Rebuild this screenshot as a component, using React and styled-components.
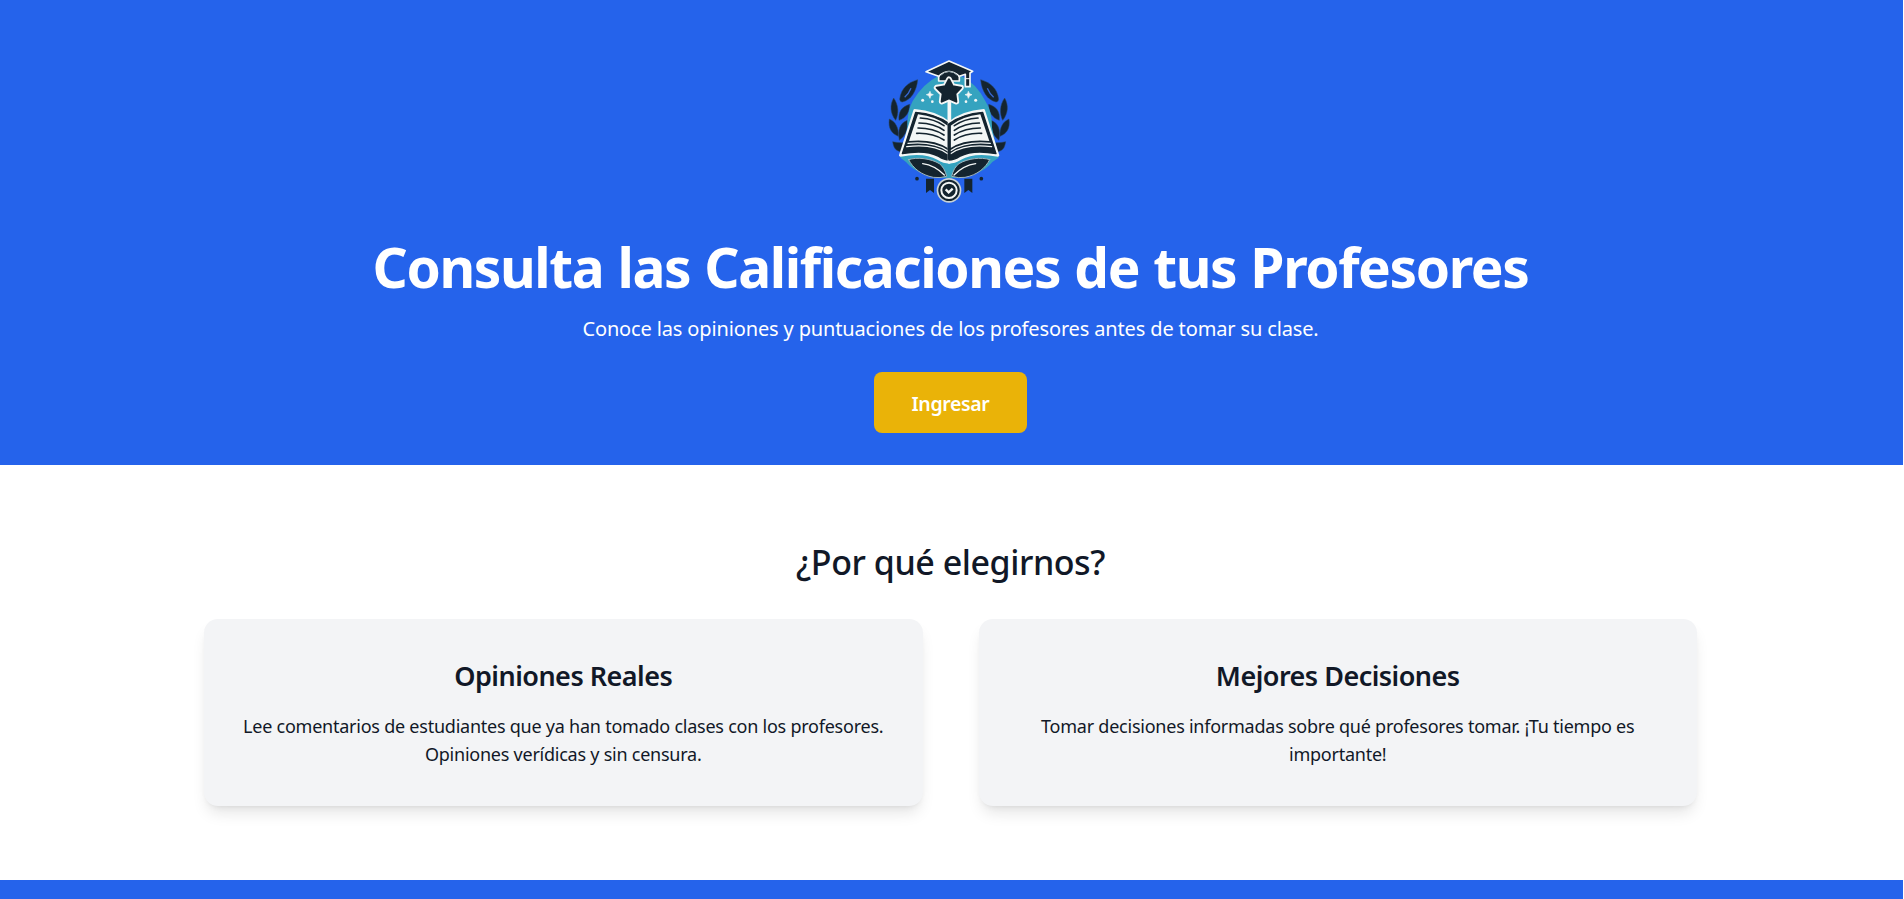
import React from 'react';
import styled, { createGlobalStyle } from 'styled-components';

const GlobalStyle = createGlobalStyle`
  * { box-sizing: border-box; }
  html { background: #fff; }
  body {
    margin: 0;
    overflow: hidden;
    font-family: 'Noto Sans', 'Open Sans', sans-serif;
    color: #111827;
  }
  h1, h2, h3, p { margin: 0; }
`;

const Page = styled.div`
  width: calc(100% - 1px);
  height: 899px;
  overflow: hidden;
`;

const Hero = styled.header`
  display: flex;
  flex-direction: column;
  align-items: center;
  height: 465px;
  padding: 45px 2px 32px 0;
  background: #2563eb;
  color: #fff;
  text-align: center;
`;

const Logo = styled.svg`
  display: block;
  flex: none;
  width: 160px;
  height: 170px;
  margin-right: 1px;
`;

const HeroTitle = styled.h1`
  margin-top: 22px;
  font-size: 55px;
  font-weight: 700;
  line-height: 60px;
  letter-spacing: -1.4px;
  word-spacing: 1.2px;
`;

const HeroText = styled.p`
  margin-top: 18px;
  font-size: 20px;
  line-height: 28px;
  letter-spacing: -0.14px;
`;

const EnterButton = styled.button`
  width: 153px;
  height: 61px;
  margin-top: 29px;
  padding: 1px 0 0;
  border: 0;
  border-radius: 8px;
  background: #eab308;
  color: #fff;
  font-family: inherit;
  font-size: 19.5px;
  font-weight: 600;
  letter-spacing: -0.36px;
`;

const Features = styled.section`
  padding: 77px 2px 74px 0;
  background: #fff;
  text-align: center;
`;

const SectionTitle = styled.h2`
  font-size: 34px;
  font-weight: 500;
  line-height: 40px;
  letter-spacing: -0.45px;
`;

const CardGrid = styled.div`
  display: grid;
  grid-template-columns: 1fr 1fr;
  gap: 56px;
  width: 1493px;
  margin: 37px auto 0;
`;

const Card = styled.article`
  height: 187px;
  padding: 39px 32px 37px;
  border-radius: 14px;
  background: #f3f4f6;
  box-shadow: 0 10px 15px -3px rgba(0, 0, 0, 0.1), 0 4px 6px -4px rgba(0, 0, 0, 0.1);
`;

const CardTitle = styled.h3`
  font-size: 27px;
  font-weight: 600;
  line-height: 36px;
  letter-spacing: -0.52px;
`;

const CardText = styled.p`
  margin-top: 18px;
  font-size: 18px;
  line-height: 28px;
  letter-spacing: -0.24px;
`;

const Footer = styled.footer`
  height: 19px;
  background: #2563eb;
`;

const INK = '#14242f';
const CREAM = '#f4f7f6';
const TEAL = '#35a3bf';

function Laurel() {
  return (
    <g fill={INK} stroke="#2b4560" strokeWidth="1.5">
      <path d="M143 104C116 112 93 128 89 163Q90 172 97 171C123 165 140 138 143 104Z" />
      <path d="M71 159C59 180 60 205 77 226C87 206 86 180 71 159Z" />
      <path d="M119 178C96 185 84 200 87 226C108 219 119 202 119 178Z" />
      <path d="M58 222C54 250 64 265 85 274C87 248 76 230 58 222Z" />
      <path d="M112 226C90 235 82 253 88 286C108 271 114 252 112 226Z" />
      <path d="M68 290C71 310 78 318 94 320L106 293C92 294 81 293 68 290Z" />
      <path d="M104 157Q116 147 123 130" stroke="#3768d2" strokeWidth="4" fill="none" />
    </g>
  );
}

// Left half of the open book.
function BookPage() {
  return (
    <g fill="none" strokeLinecap="round" strokeLinejoin="round">
      <path d="M238 234Q198 201 134 196L91 331Q165 318 204 341Q222 352 238 352Z" fill={CREAM} stroke={CREAM} strokeWidth="8" />
      <path d="M238 236Q198 207 137 202L97 326Q165 313 206 334Q223 345 238 345Z" fill={INK} stroke={INK} strokeWidth="4" />
      <path d="M233 242Q198 214 144 208L117 288Q190 281 233 309Z" fill={CREAM} />
      <path d="M114 295Q190 288 233 317" stroke={CREAM} strokeWidth="3.5" />
      <path d="M110 305Q190 295 233 326" stroke={CREAM} strokeWidth="3.5" />
      <path d="M151 219Q194 222 222 242M147 234Q192 235 222 256M144 249Q190 249 222 270M140 265Q188 263 222 285" stroke={INK} strokeWidth="5" />
    </g>
  );
}

function BaseLeaf() {
  return (
    <g strokeLinecap="round" fill="none">
      <path d="M116 344C142 335 183 341 208 356Q224 368 230 394Q210 400 190 397C154 390 129 370 116 344Z" fill={INK} stroke="#9fb4bb" strokeWidth="3" />
      <path d="M158 356Q194 361 223 390" stroke={CREAM} strokeWidth="4" />
    </g>
  );
}

function Sparkles() {
  return (
    <g fill={CREAM}>
      <path d="M180 139Q180 149 190 149Q180 150 180 160Q178 150 169 149Q178 149 180 139Z" stroke={CREAM} strokeWidth="2" />
      <circle cx="158" cy="166" r="4.5" />
      <circle cx="187" cy="170" r="4" />
    </g>
  );
}

function Ribbon() {
  return (
    <g fill={INK}>
      <path d="M168 401H192V444L180 435L168 444Z" />
      <circle cx="141" cy="401" r="5.5" />
    </g>
  );
}

// Draws its children and their mirror image about the logo's vertical axis.
function Mirrored({ children }) {
  return (
    <>
      {children}
      <g transform="translate(475 0) scale(-1 1)">{children}</g>
    </>
  );
}

function SchoolLogo() {
  return (
    <Logo viewBox="0 0 480 510" role="img" aria-label="Logo">
      <Mirrored><Laurel /></Mirrored>
      <path d="M205 93Q160 115 128 168Q111 200 112 248L91 338L108 351C132 381 180 399 237 399S345 381 367 351L386 338L366 248Q367 200 346 168Q319 115 270 91Z" fill={TEAL} />
      <Mirrored><BaseLeaf /></Mirrored>
      <Mirrored><Sparkles /></Mirrored>
      <path d="M238 168V232" stroke={CREAM} strokeWidth="11" />
      <Mirrored><BookPage /></Mirrored>
      <path d="M237.500 236V344" stroke={INK} strokeWidth="9" />
      <path d="M206 84V108H268V84L237 70Z" fill={INK} stroke={CREAM} strokeWidth="5" strokeLinejoin="round" />
      <path d="M168 80L237 48L308 79L300 84V125H286V88L268 94Q237 66 206 94Z" fill={INK} stroke={CREAM} strokeWidth="5" strokeLinejoin="round" />
      <path d="M210 104V92Q237 70 264 92V104Z" fill={INK} />
      <path d="M211 92Q237 66 263 92" fill="none" stroke="#81949d" strokeWidth="3" />
      <path d="M286 101H300" stroke={CREAM} strokeWidth="3" />
      <path d="M237 103L248 124L273 128L256 146L259 170L237 160L215 170L218 146L200 128L226 124Z" fill={CREAM} stroke={CREAM} strokeWidth="17" strokeLinejoin="round" />
      <path d="M237 103L248 124L273 128L256 146L259 170L237 160L215 170L218 146L200 128L226 124Z" fill={INK} stroke={INK} strokeWidth="6" strokeLinejoin="round" />
      <Mirrored><Ribbon /></Mirrored>
      <circle cx="237" cy="436" r="37" fill="#c9d2d4" />
      <circle cx="237" cy="436" r="32" fill={INK} />
      <circle cx="237" cy="436" r="23" fill={INK} stroke={CREAM} strokeWidth="6" />
      <path d="M227 433L236 442L248 431" fill="none" stroke={CREAM} strokeWidth="7" />
    </Logo>
  );
}

const FEATURES = [
  {
    title: 'Opiniones Reales',
    text: 'Lee comentarios de estudiantes que ya han tomado clases con los profesores. Opiniones verídicas y sin censura.',
  },
  {
    title: 'Mejores Decisiones',
    text: 'Tomar decisiones informadas sobre qué profesores tomar. ¡Tu tiempo es importante!',
  },
];

export default function App() {
  return (
    <>
      <GlobalStyle />
      <Page>
        <Hero>
          <SchoolLogo />
          <HeroTitle>Consulta las Calificaciones de tus Profesores</HeroTitle>
          <HeroText>Conoce las opiniones y puntuaciones de los profesores antes de tomar su clase.</HeroText>
          <EnterButton type="button">Ingresar</EnterButton>
        </Hero>
        <Features>
          <SectionTitle>¿Por qué elegirnos?</SectionTitle>
          <CardGrid>
            {FEATURES.map(({ title, text }) => (
              <Card key={title}>
                <CardTitle>{title}</CardTitle>
                <CardText>{text}</CardText>
              </Card>
            ))}
          </CardGrid>
        </Features>
        <Footer />
      </Page>
    </>
  );
}
